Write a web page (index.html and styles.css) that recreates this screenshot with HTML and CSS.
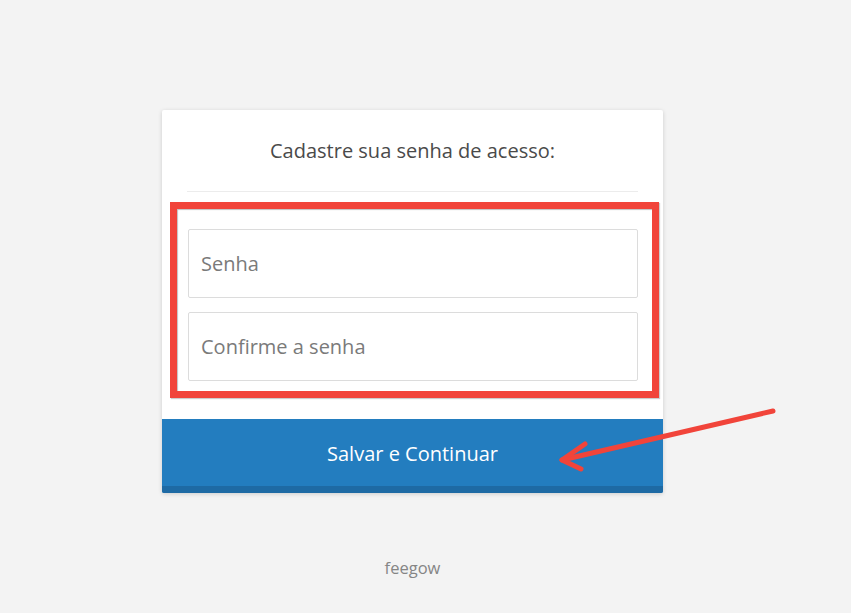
FILE: index.html
```html
<!DOCTYPE html>
<html lang="pt-BR">
<head>
<meta charset="utf-8">
<title>Cadastre sua senha</title>
<link rel="stylesheet" href="styles.css">
</head>
<body>
<div class="page">
  <div class="column">
    <div class="card">
      <div class="card-head">
        <h1 class="title">Cadastre sua senha de acesso:</h1>
        <hr class="divider">
      </div>
      <form class="form">
        <input class="field" type="password" placeholder="Senha">
        <input class="field" type="password" placeholder="Confirme a senha">
      </form>
      <button class="submit" type="button">Salvar e Continuar</button>
    </div>
    <div class="brand">feegow</div>
  </div>
  <div class="highlight"></div>
  <svg class="arrow" width="240" height="80" viewBox="0 0 240 80">
    <g fill="none" stroke="#f1443a" stroke-width="5" stroke-linecap="round" stroke-linejoin="round">
      <path d="M214 9 L3 58"/>
      <path d="M26 42 L3 58 L22 67"/>
    </g>
  </svg>
</div>
</body>
</html>
```

FILE: styles.css
```css
* { box-sizing: border-box; }
html, body { margin: 0; padding: 0; }
body {
  background: #f3f3f3;
  font-family: "Open Sans", "Noto Sans", sans-serif;
  width: 851px;
  height: 613px;
  overflow: hidden;
}
.page {
  position: relative;
  padding: 110px 0 0 162px;
  height: 613px;
}
.column { width: 501px; }
.card {
  background: #fff;
  border-radius: 2px;
  box-shadow: 0 1px 4px rgba(0,0,0,0.16);
  overflow: hidden;
}
.card-head { padding: 28px 25px 0 25px; }
.title {
  margin: 0;
  font-size: 20px;
  font-weight: 400;
  line-height: 26px;
  color: #4a4a4a;
  text-align: center;
}
.divider {
  margin: 27px 0 0 0;
  border: 0;
  border-top: 1px solid #ececec;
  height: 0;
}
.form {
  display: flex;
  flex-direction: column;
  gap: 14px;
  padding: 37px 25px 38px 26px;
}
.field {
  display: block;
  width: 450px;
  height: 69px;
  border: 1px solid #dcdcdc;
  border-radius: 2px;
  padding: 0 12px;
  font-family: "Open Sans", "Noto Sans", sans-serif;
  font-size: 20px;
  color: #555;
  background: #fff;
  outline: none;
}
.field::placeholder { color: #7a7a7a; }
.submit {
  display: block;
  width: 100%;
  height: 74px;
  border: 0;
  border-bottom: 7px solid #1e6aa4;
  background: #237dbf;
  color: #fff;
  font-family: "Open Sans", "Noto Sans", sans-serif;
  font-size: 20px;
  padding: 1px 0 0 0;
  cursor: pointer;
}
.brand {
  margin-top: 64px;
  text-align: center;
  font-size: 16.5px;
  line-height: 22px;
  color: #858585;
}
.highlight {
  position: absolute;
  left: 170px;
  top: 202px;
  width: 489px;
  height: 196px;
  border: 7px solid #f1443a;
  box-shadow: inset 1px 1px 1px rgba(0,0,0,0.25), 1px 1px 1px rgba(0,0,0,0.2);
}
.arrow {
  position: absolute;
  left: 559px;
  top: 402px;
  overflow: visible;
}
```
